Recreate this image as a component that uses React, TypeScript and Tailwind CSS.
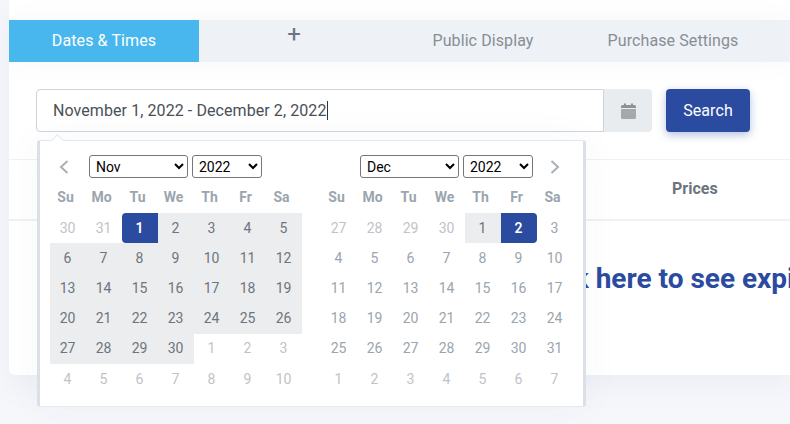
const nov = [
  [30, 31, 1, 2, 3, 4, 5],
  [6, 7, 8, 9, 10, 11, 12],
  [13, 14, 15, 16, 17, 18, 19],
  [20, 21, 22, 23, 24, 25, 26],
  [27, 28, 29, 30, 1, 2, 3],
  [4, 5, 6, 7, 8, 9, 10],
];

const dec = [
  [27, 28, 29, 30, 1, 2, 3],
  [4, 5, 6, 7, 8, 9, 10],
  [11, 12, 13, 14, 15, 16, 17],
  [18, 19, 20, 21, 22, 23, 24],
  [25, 26, 27, 28, 29, 30, 31],
  [1, 2, 3, 4, 5, 6, 7],
];

const weekdays = ['Su', 'Mo', 'Tu', 'We', 'Th', 'Fr', 'Sa'];

const tabs = ['Dates & Times', '+', 'Public Display', 'Purchase Settings'];

function cellClass(month: 'nov' | 'dec', r: number, c: number) {
  const base = 'h-[30.2px] flex items-center justify-center pr-[1px] text-[14px] ';
  if (month === 'nov') {
    if (r === 0 && c < 2) return base + 'text-[#bfc3c7]';
    if (r === 0 && c === 2) return base + 'bg-[#2b4ba1] text-white font-semibold rounded-l-[4px]';
    if (r === 4 && c > 3) return base + 'text-[#bfc3c7]';
    if (r === 5) return base + 'text-[#bfc3c7]';
    return base + 'bg-[#ecedef] text-[#6c757d]';
  }
  if (r === 0 && c < 4) return base + 'text-[#bfc3c7]';
  if (r === 0 && c === 4) return base + 'bg-[#ecedef] text-[#6c757d]';
  if (r === 0 && c === 5) return base + 'bg-[#2b4ba1] text-white font-semibold rounded-r-[4px]';
  if (r === 5) return base + 'text-[#bfc3c7]';
  return base + 'text-[#9aa5ae]';
}

function MonthGrid({ month, rows }: { month: 'nov' | 'dec'; rows: number[][] }) {
  return (
    <div className="w-[252px]">
      <div className="grid grid-cols-7 h-[31px] items-center">
        {weekdays.map((d) => (
          <div key={d} className="text-center pr-[5px] pb-[1px] text-[14px] font-bold text-[#9aa5ae]">
            {d}
          </div>
        ))}
      </div>
      <div className="grid grid-cols-7">
        {rows.map((row, r) =>
          row.map((day, c) => (
            <div key={`${r}-${c}`} className={cellClass(month, r, c)}>
              {day}
            </div>
          ))
        )}
      </div>
    </div>
  );
}

function MonthSelect({ value, width }: { value: string; width: string }) {
  return (
    <select
      defaultValue={value}
      className={`${width} h-[23px] appearance-auto bg-white border border-[#767676] rounded-[3px] text-[14px] text-black pl-[2px]`}
    >
      <option>{value}</option>
    </select>
  );
}

function Chevron({ flip }: { flip?: boolean }) {
  return (
    <svg width="10" height="14" viewBox="0 0 10 14" className={flip ? 'rotate-180' : ''}>
      <path d="M8.500 1 L2 7 L8.500 13" fill="none" stroke="#a9b1b8" strokeWidth="2" />
    </svg>
  );
}

function DatePicker() {
  return (
    <div className="absolute left-[37px] top-[140px] w-[549px] h-[267px] bg-white border border-[#e3e7ee] border-l-[3px] border-l-[#dcdfe5] border-r-[3px] border-r-[#dcdfe5] rounded-[3px] pl-[10px] pt-[14px] shadow-[0_0_40px_rgba(60,70,100,0.04)]">
      <div className="absolute left-[13px] top-[-5px] w-[9px] h-[9px] rotate-45 bg-white border-l border-t border-[#e3e7ee]" />
      <div className="flex gap-[19px]">
        <div>
          <div className="flex items-center h-[23px]">
            <div className="w-[39px] pl-[9px] flex">
              <Chevron />
            </div>
            <MonthSelect value="Nov" width="w-[99px]" />
            <div className="w-1" />
            <MonthSelect value="2022" width="w-[70px]" />
          </div>
          <div className="mt-[4px]">
            <MonthGrid month="nov" rows={nov} />
          </div>
        </div>
        <div>
          <div className="flex items-center h-[23px]">
            <div className="w-[39px]" />
            <MonthSelect value="Dec" width="w-[99px]" />
            <div className="w-1" />
            <MonthSelect value="2022" width="w-[70px]" />
            <div className="ml-[17px] flex">
              <Chevron flip />
            </div>
          </div>
          <div className="mt-[4px]">
            <MonthGrid month="dec" rows={dec} />
          </div>
        </div>
      </div>
    </div>
  );
}

export default function App() {
  return (
    <div
      className="relative w-[790px] h-[424px] overflow-hidden bg-[#f6f7fb] pl-[9px]"
      style={{ fontFamily: 'Roboto, sans-serif' }}
    >
      <div className="h-[375px] overflow-hidden bg-white rounded-bl-[6px] shadow-[0_10px_30px_rgba(120,130,160,0.08)]">
        {/* Tabs */}
        <div className="h-5" />
        <div className="flex h-[42px] bg-[#eef1f6] shadow-[0_0_30px_rgba(0,0,0,0.035)]">
          {tabs.map((tab, i) => (
            <div
              key={tab}
              className={
                i === 0
                  ? 'w-[190px] flex items-center justify-center bg-[#48b7ee] text-white text-[16px] tracking-[0.1px]'
                  : i === 1
                    ? 'w-[190px] flex justify-center text-[#6c757d] text-[24px] leading-[28px]'
                    : 'w-[190px] flex items-center justify-center pr-[2px] text-[#868e96] text-[16px] tracking-[0.1px]'
              }
            >
              {tab}
            </div>
          ))}
        </div>

        {/* Search row */}
        <div className="flex mt-[27px] ml-[27px] h-[43px]">
          <div className="w-[568px] flex items-center bg-white border border-[#ced4da] rounded-l-[4px] pl-4 text-[16px] text-[#495057] tracking-[0.08px]">
            November 1, 2022 - December 2, 2022
            <span className="inline-block w-px h-[19px] bg-[#333]" />
          </div>
          <div className="w-[48px] flex items-center justify-center bg-[#e9ecef] rounded-r-[4px]">
            <svg width="15" height="16" viewBox="0 0 15 16">
              <path d="M0 6h15v8.500a1.500 1.500 0 0 1-1.500 1.500h-12A1.500 1.500 0 0 1 0 14.500z" fill="#a5a8ad" />
              <path d="M1.500 2H3V0.500h2V2h5V0.500h2V2h1.500A1.500 1.500 0 0 1 15 3.500V5H0V3.500A1.500 1.500 0 0 1 1.500 2z" fill="#8e9197" />
            </svg>
          </div>
          <button className="ml-[14px] w-[84px] rounded-[4px] bg-[#2b4ba1] text-white text-[16px] tracking-[0.1px] shadow-[0_3px_8px_rgba(43,75,161,0.35)]">
            Search
          </button>
        </div>

        {/* Table header */}
        <div className="mt-[27px] h-[62px] pb-[2px] border-t border-[#eef1f6] border-b-[2px] flex items-center">
          <div className="ml-[663px] text-[16px] font-bold text-[#6c757d]">Prices</div>
        </div>

        {/* Table body */}
        <div className="pt-[37px] pl-[517px] whitespace-nowrap text-[28px] font-bold text-[#2b4ba1]">
          Click here to see expired events
        </div>
      </div>

      <DatePicker />
    </div>
  );
}
